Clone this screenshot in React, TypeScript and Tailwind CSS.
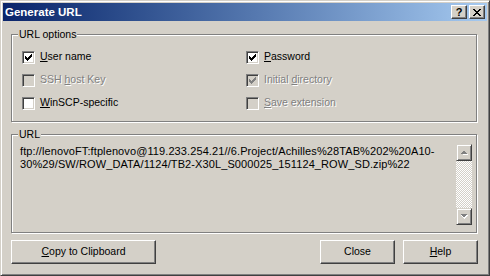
import React from "react";

const CHECK_ROWS = [
  "......X",
  ".....XX",
  "X...XXX",
  "XX.XXX.",
  "XXXXX..",
  ".XXX...",
  "..X....",
];

function CheckGlyph({ color }: { color: string }) {
  const rects: React.ReactElement[] = [];
  CHECK_ROWS.forEach((row, y) =>
    row.split("").forEach((c, x) => {
      if (c === "X") rects.push(<rect key={`${x}-${y}`} x={x} y={y} width={1} height={1} fill={color} />);
    })
  );
  return (
    <svg className="absolute left-[2px] top-[2px]" width="7" height="7" viewBox="0 0 7 7" shapeRendering="crispEdges">
      {rects}
    </svg>
  );
}

function Checkbox({ checked, disabled }: { checked?: boolean; disabled?: boolean }) {
  return (
    <span
      className={`relative block w-[13px] h-[13px] shrink-0 border border-t-[#808080] border-l-[#808080] border-r-white border-b-white shadow-[inset_1px_1px_0_#404040,inset_-1px_-1px_0_#d4d0c8] ${
        disabled ? "bg-[#d4d0c8]" : "bg-white"
      }`}
    >
      {checked && <CheckGlyph color={disabled ? "#808080" : "#000000"} />}
    </span>
  );
}

function Option({
  pre,
  key_,
  post,
  checked,
  disabled,
}: {
  pre: string;
  key_: string;
  post: string;
  checked?: boolean;
  disabled?: boolean;
}) {
  return (
    <div className="flex items-start h-[23px]">
      <Checkbox checked={checked} disabled={disabled} />
      <span
        className={`ml-[5px] leading-[11px] whitespace-nowrap ${
          disabled ? "text-[#808080] [text-shadow:1px_1px_0_#ffffff]" : "text-black"
        }`}
      >
        {pre}
        <span className="underline decoration-1 underline-offset-[1px]">{key_}</span>
        {post}
      </span>
    </div>
  );
}

function GroupBox({
  label,
  className,
  children,
}: {
  label: string;
  className: string;
  children: React.ReactNode;
}) {
  return (
    <div
      className={`relative w-[466px] border border-[#808080] shadow-[inset_1px_1px_0_#ffffff,1px_1px_0_#ffffff] ${className}`}
    >
      <span className="absolute -top-[7px] left-[6px] px-[1px] bg-[#d4d0c8] leading-[13px] text-black">
        {label}
      </span>
      {children}
    </div>
  );
}

function Button({ w, children }: { w: string; children: React.ReactNode }) {
  return (
    <div
      className={`${w} h-[24px] flex items-center justify-center border border-t-white border-l-white border-r-[#404040] border-b-[#404040] shadow-[inset_-1px_-1px_0_#808080] text-black`}
    >
      {children}
    </div>
  );
}

function ScrollArrow({ up }: { up?: boolean }) {
  return (
    <div className="w-[16px] h-[17px] flex items-center justify-center bg-[#d4d0c8] border border-t-[#d4d0c8] border-l-[#d4d0c8] border-r-[#404040] border-b-[#404040] shadow-[inset_1px_1px_0_#ffffff,inset_-1px_-1px_0_#808080]">
      <svg width="8" height="5" viewBox="0 0 8 5" shapeRendering="crispEdges">
        {up ? (
          <>
            <polygon points="1,4 4,1 7,4" fill="#ffffff" transform="translate(1,1)" />
            <polygon points="0,4 3.5,0.5 7,4" fill="#808080" />
          </>
        ) : (
          <>
            <polygon points="1,0 8,0 4.5,4" fill="#ffffff" transform="translate(0,1)" />
            <polygon points="0,0 7,0 3.5,3.5" fill="#808080" />
          </>
        )}
      </svg>
    </div>
  );
}

export default function App() {
  return (
    <div
      className="w-[490px] h-[276px] bg-[#d4d0c8] border border-t-[#d4d0c8] border-l-[#d4d0c8] border-r-[#404040] border-b-[#404040] shadow-[inset_1px_1px_0_#ffffff,inset_-1px_-1px_0_#808080] p-[2px] text-[10.5px] overflow-hidden"
      style={{ fontFamily: '"Liberation Sans", Arial, sans-serif' }}
    >
      {/* Title bar */}
      <div className="h-[18px] flex items-center justify-between bg-gradient-to-r from-[#0a246a] to-[#a6caf0] pl-[2px] pr-[2px]">
        <span className="text-white font-bold text-[11.5px] leading-[18px]">Generate URL</span>
        <div className="flex gap-[2px]">
          <div className="w-[16px] h-[14px] flex items-center justify-center bg-[#d4d0c8] border border-t-white border-l-white border-r-[#404040] border-b-[#404040] shadow-[inset_-1px_-1px_0_#808080]">
            <span className="font-bold text-[11px] leading-[11px] text-black">?</span>
          </div>
          <div className="w-[16px] h-[14px] flex items-center justify-center bg-[#d4d0c8] border border-t-white border-l-white border-r-[#404040] border-b-[#404040] shadow-[inset_-1px_-1px_0_#808080]">
            <svg width="8" height="7" viewBox="0 0 8 7" shapeRendering="crispEdges">
              <path d="M0 0h2v1H0zM6 0h2v1H6zM1 1h2v1H1zM5 1h2v1H5zM2 2h4v1H2zM3 3h2v1H3zM2 4h4v1H2zM1 5h2v1H1zM5 5h2v1H5zM0 6h2v1H0zM6 6h2v1H6z" fill="#000" />
            </svg>
          </div>
        </div>
      </div>

      {/* URL options */}
      <GroupBox label="URL options" className="ml-[8px] mt-[13px] h-[88px]">
        <div className="grid grid-cols-[224px_1fr] pl-[10px] pt-[16px]">
          <Option pre="" key_="U" post="ser name" checked />
          <Option pre="" key_="P" post="assword" checked />
          <Option pre="SSH " key_="h" post="ost Key" disabled />
          <Option pre="Initial " key_="d" post="irectory" checked disabled />
          <Option pre="" key_="W" post="inSCP-specific" />
          <Option pre="" key_="S" post="ave extension" disabled />
        </div>
      </GroupBox>

      {/* URL */}
      <GroupBox label="URL" className="ml-[8px] mt-[12px] h-[99px]">
        <div className="flex pl-[8px] pt-[9px]">
          <div className="w-[436px] h-[81px] pt-[1px] text-[11px] leading-[13px] tracking-[0.1px] text-black whitespace-nowrap">
            <div>ftp://lenovoFT:ftplenovo@119.233.254.21//6.Project/Achilles%28TAB%202%20A10-</div>
            <div>30%29/SW/ROW_DATA/1124/TB2-X30L_S000025_151124_ROW_SD.zip%22</div>
          </div>
          <div className="w-[16px] h-[81px] flex flex-col">
            <ScrollArrow up />
            <div className="flex-1 bg-[repeating-conic-gradient(#ffffff_0_25%,#d4d0c8_0_50%)] bg-[length:2px_2px]" />
            <ScrollArrow />
          </div>
        </div>
      </GroupBox>

      {/* Buttons */}
      <div className="flex ml-[8px] mt-[7px] w-[467px]">
        <Button w="w-[145px]">
          <span>
            <span className="underline decoration-1 underline-offset-[1px]">C</span>opy to Clipboard
          </span>
        </Button>
        <div className="flex-1" />
        <Button w="w-[75px]">Close</Button>
        <div className="w-[8px]" />
        <Button w="w-[75px]">
          <span>
            <span className="underline decoration-1 underline-offset-[1px]">H</span>elp
          </span>
        </Button>
      </div>
    </div>
  );
}
